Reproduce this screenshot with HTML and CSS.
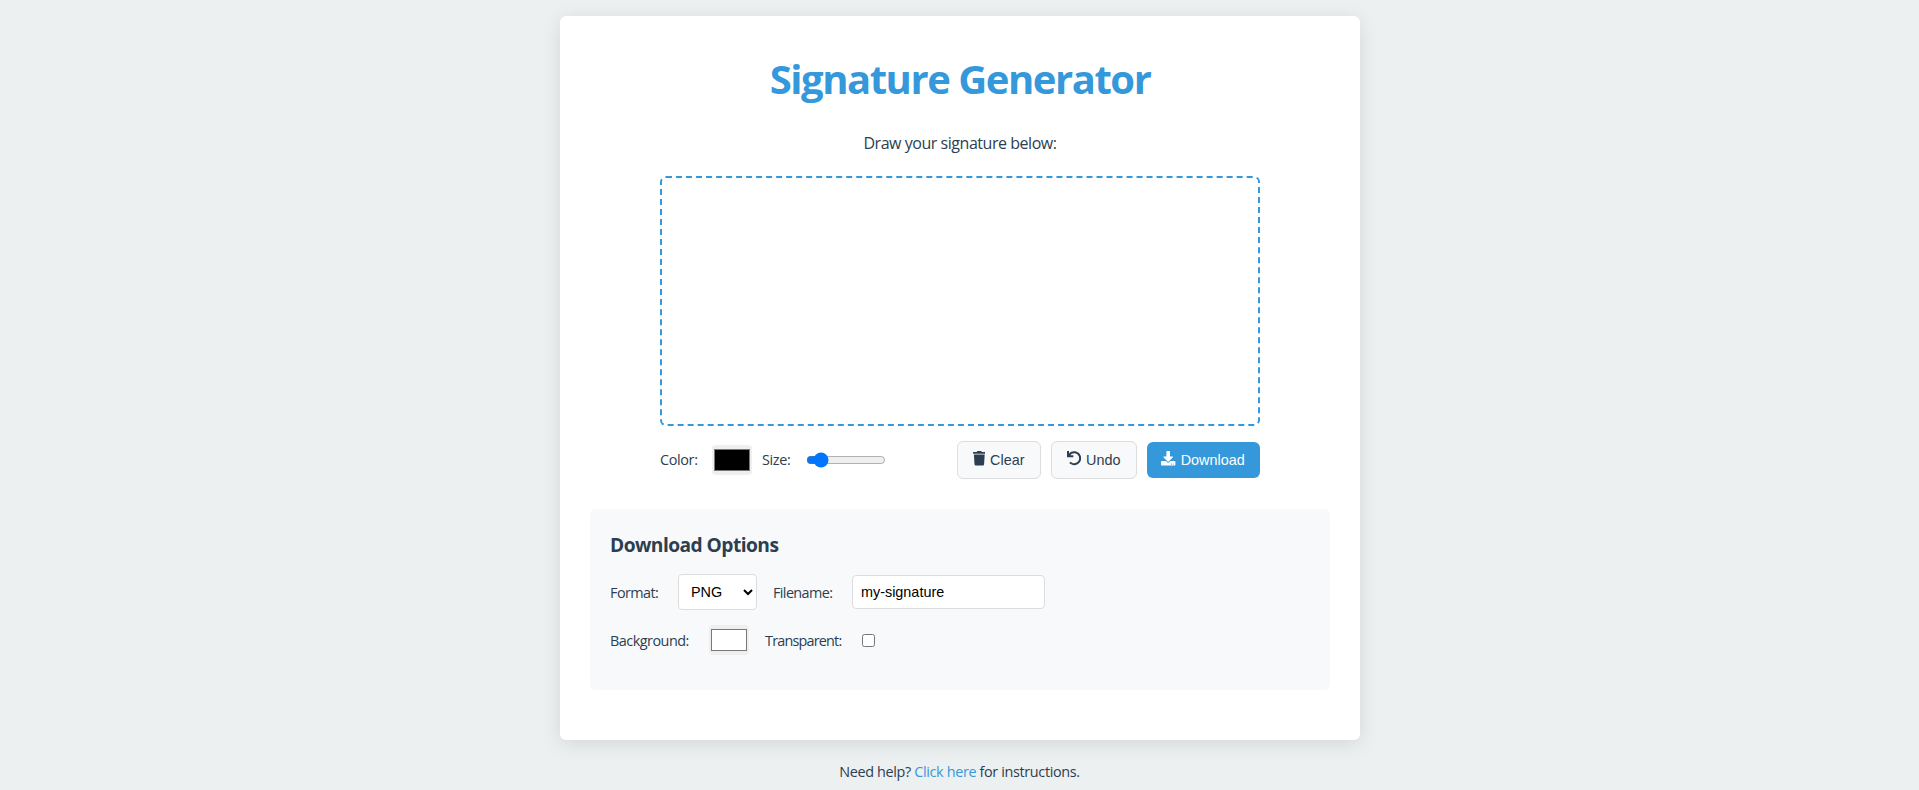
FILE: index.html
```html
<!DOCTYPE html>
<html lang="en">
<head>
<meta charset="utf-8">
<title>Signature Generator</title>
<link rel="stylesheet" href="styles.css">
</head>
<body>
<main class="card">
  <h1 class="title">Signature Generator</h1>
  <p class="lead">Draw your signature below:</p>
  <canvas class="pad" width="596" height="246"></canvas>
  <div class="controls">
    <div class="pen">
      <label class="label label-color" for="color">Color:</label>
      <input class="swatch" type="color" id="color" value="#000000">
      <label class="label label-size" for="size">Size:</label>
      <input class="size" type="range" id="size" min="1" max="10" value="2">
    </div>
    <div class="actions">
      <button class="btn btn-clear"><svg class="icon icon-trash" viewBox="0 0 448 512"><path d="M432 32H312l-9.400-18.700A24 24 0 0 0 281.100 0H166.800a23.720 23.720 0 0 0-21.400 13.300L136 32H16A16 16 0 0 0 0 48v32a16 16 0 0 0 16 16h416a16 16 0 0 0 16-16V48a16 16 0 0 0-16-16zM53.200 467a48 48 0 0 0 47.900 45h245.800a48 48 0 0 0 47.900-45L416 128H32z"/></svg>Clear</button>
      <button class="btn btn-undo"><svg class="icon icon-undo" viewBox="0 0 512 512"><path d="M212.333 224.333H12c-6.627 0-12-5.373-12-12V12C0 5.373 5.373 0 12 0h48c6.627 0 12 5.373 12 12v78.112C117.773 39.279 184.260 7.470 258.175 8.007c136.906.994 246.448 111.623 246.157 248.532C504.041 393.258 393.120 504 256.333 504c-64.089 0-122.496-24.313-166.510-64.215-5.099-4.622-5.334-12.554-.467-17.420l33.967-33.967c4.474-4.474 11.662-4.717 16.401-.525C170.760 415.336 211.580 432 256.333 432c97.268 0 176-78.716 176-176 0-97.267-78.716-176-176-176-58.496 0-110.280 28.476-142.274 72.333h98.274c6.627 0 12 5.373 12 12v48c0 6.627-5.373 12-12 12z"/></svg>Undo</button>
      <button class="btn btn-download"><svg class="icon icon-download" viewBox="0 0 512 512"><path d="M216 0h80c13.300 0 24 10.700 24 24v168h87.700c17.800 0 26.700 21.500 14.100 34.100L269.700 378.300c-7.500 7.500-19.800 7.500-27.300 0L90.100 226.100c-12.600-12.600-3.700-34.100 14.100-34.100H192V24c0-13.300 10.700-24 24-24zm296 376v112c0 13.300-10.700 24-24 24H24c-13.300 0-24-10.700-24-24V376c0-13.300 10.700-24 24-24h146.700l49 49c20.100 20.100 52.500 20.100 72.600 0l49-49H488c13.300 0 24 10.700 24 24zm-124 88c0-11-9-20-20-20s-20 9-20 20 9 20 20 20 20-9 20-20zm64 0c0-11-9-20-20-20s-20 9-20 20 9 20 20 20 20-9 20-20z"/></svg>Download</button>
    </div>
  </div>
  <section class="options">
    <h2 class="subtitle">Download Options</h2>
    <div class="row">
      <label class="label label-format" for="format">Format:</label>
      <select class="field format" id="format"><option>PNG</option><option>JPG</option><option>SVG</option></select>
      <label class="label label-filename" for="filename">Filename:</label>
      <input class="field filename" type="text" id="filename" value="my-signature">
    </div>
    <div class="row">
      <label class="label label-background" for="background">Background:</label>
      <input class="swatch" type="color" id="background" value="#ffffff">
      <label class="label label-transparent" for="transparent">Transparent:</label>
      <input class="check" type="checkbox" id="transparent">
    </div>
  </section>
</main>
<footer class="help">Need help? <a class="link" href="#">Click here</a> for instructions.</footer>
</body>
</html>
```
FILE: styles.css
```css
* { box-sizing: border-box; }
html { overflow: hidden; }
body {
  margin: 0;
  height: 790px;
  padding-top: 16px;
  display: flex;
  flex-direction: column;
  align-items: center;
  background: #ecf0f1;
  color: #2c3e50;
  font-family: "Segoe UI", "Open Sans", "Noto Sans", sans-serif;
}
.card {
  width: 800px;
  height: 724px;
  margin-left: 1px;
  padding: 30px;
  background: #fff;
  border-radius: 6px;
  box-shadow: 0 4px 20px rgba(0, 0, 0, 0.1);
  display: flex;
  flex-direction: column;
  align-items: center;
}
.title {
  margin: 3px 0 0;
  height: 60px;
  line-height: 60px;
  font-size: 40px;
  font-weight: 700;
  letter-spacing: -1.45px;
  color: #3498db;
  white-space: nowrap;
}
.lead { margin: 21px 0 0; height: 26px; line-height: 26px; font-size: 16px; letter-spacing: -0.46px; }
.pad {
  width: 600px;
  height: 250px;
  margin-top: 20px;
  border: 2px dashed #3498db;
  border-radius: 6px;
}
.controls {
  width: 600px;
  height: 38px;
  margin-top: 15px;
  display: flex;
  justify-content: space-between;
  align-items: center;
}
.pen, .actions, .row { display: flex; align-items: center; }
.actions { gap: 10px; }
.label { font-size: 14.4px; line-height: 20px; letter-spacing: -0.35px; white-space: nowrap; flex: none; }
.label-color { width: 52px; }
.label-size { width: 44px; margin-left: 10px; }
.label-format { width: 68px; letter-spacing: -0.55px; padding-top: 2px; }
.label-filename { width: 79px; margin-left: 16px; letter-spacing: -0.6px; padding-top: 2px; }
.label-background { width: 99px; letter-spacing: -0.5px; padding-top: 2px; }
.label-transparent { width: 97px; margin-left: 16px; letter-spacing: -0.8px; padding-top: 2px; }
.swatch { width: 40px; height: 30px; padding: 0; border: 0; border-radius: 4px; background: #efefef; }
.size { width: 80px; margin: 0; }
.btn {
  height: 38px;
  padding: 0;
  display: flex;
  align-items: center;
  justify-content: center;
  gap: 5px;
  border: 1px solid #ddd;
  border-radius: 6px;
  background: #f8f9fa;
  color: #2c3e50;
  font: 14.4px "Liberation Sans", Arial, sans-serif;
}
.btn-clear { width: 84px; }
.btn-undo { width: 86px; }
.btn-download { width: 113px; height: 36px; border: 0; background: #3498db; color: #fff; }
.icon { height: 14.4px; fill: currentColor; margin: -3px 0 0 -1px; }
.icon-trash { width: 12.6px; }
.icon-undo, .icon-download { width: 14.4px; }
.options {
  width: 740px;
  height: 181px;
  margin-top: 30px;
  padding: 20px;
  background: #f8f9fb;
  border-radius: 6px;
}
.subtitle { margin: 2px 0 15px; font-size: 19.2px; line-height: 28px; letter-spacing: -0.55px; }
.row { height: 36px; margin-bottom: 12px; }
.field {
  border: 1px solid #ddd;
  border-radius: 4px;
  background: #fff;
  color: #000;
  font: 14.4px "Liberation Sans", Arial, sans-serif;
}
.format { width: 79px; height: 36px; padding: 8px; }
.filename { width: 193px; height: 34px; padding: 8px; }
.check { width: 13px; height: 13px; margin: 0; }
.help { margin-top: 21px; font-size: 14.4px; line-height: 22px; letter-spacing: -0.35px; }
.link { color: #3498db; text-decoration: none; }
```
